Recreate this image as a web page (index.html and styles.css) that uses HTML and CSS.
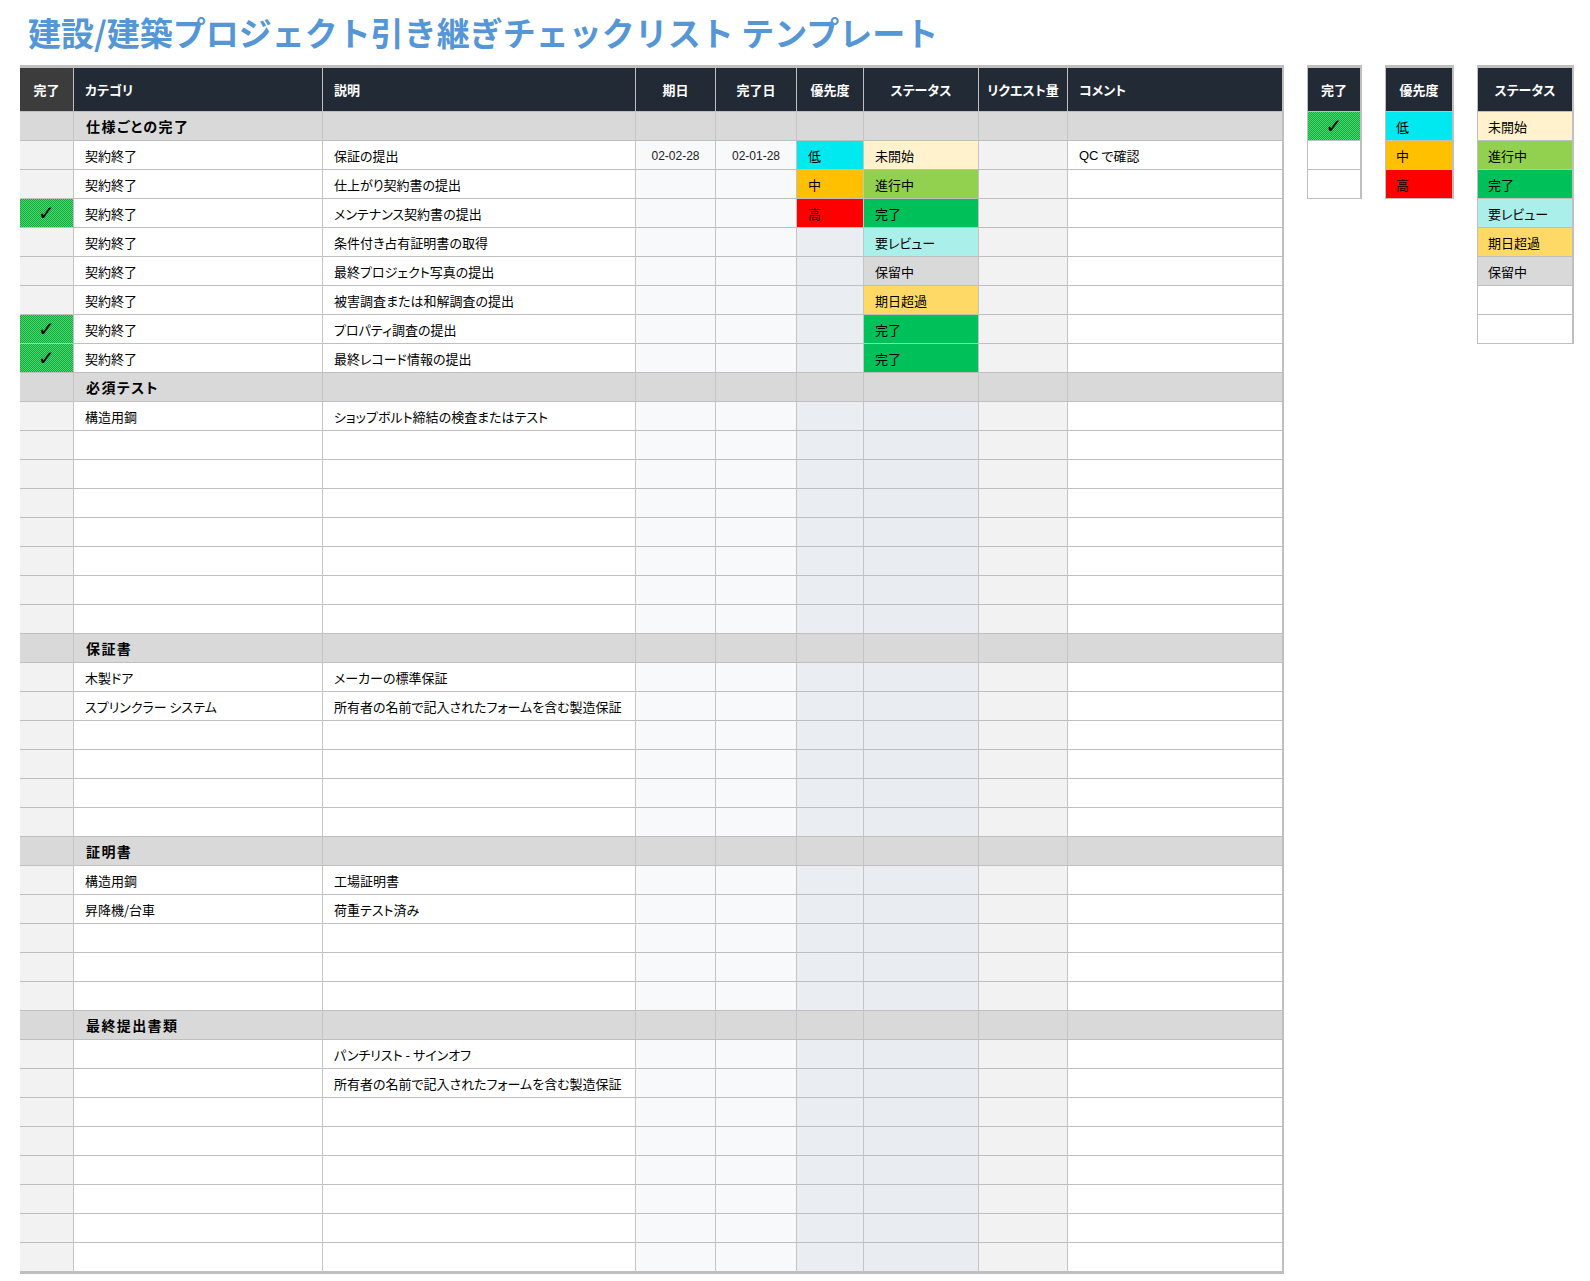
FILE: index.html
```html
<!DOCTYPE html>
<html lang="ja">
<head>
<meta charset="utf-8">
<title>建設/建築プロジェクト引き継ぎチェックリスト テンプレート</title>
<link rel="stylesheet" href="styles.css">
</head>
<body>
<h1 class="title">建設/建築プロジェクト引き継ぎチェックリスト テンプレート</h1>
<div class="layout">
  <div class="sheet">
    <div class="row head">
      <span class="c hc-done">完了</span><span class="c hl">カテゴリ</span><span class="c hl">説明</span><span class="c">期日</span><span class="c">完了日</span><span class="c">優先度</span><span class="c">ステータス</span><span class="c">リクエスト量</span><span class="c hl">コメント</span>
    </div>

    <div class="row sec"><span class="c"></span><span class="c">仕様ごとの完了</span><span class="c"></span><span class="c"></span><span class="c"></span><span class="c"></span><span class="c"></span><span class="c"></span><span class="c"></span></div>
    <div class="row"><span class="c"></span><span class="c">契約終了</span><span class="c">保証の提出</span><span class="c">02-02-28</span><span class="c">02-01-28</span><span class="c p-low">低</span><span class="c s-todo">未開始</span><span class="c"></span><span class="c"><span class="latin">QC</span>&nbsp;で確認</span></div>
    <div class="row"><span class="c"></span><span class="c">契約終了</span><span class="c">仕上がり契約書の提出</span><span class="c"></span><span class="c"></span><span class="c p-mid">中</span><span class="c s-prog">進行中</span><span class="c"></span><span class="c"></span></div>
    <div class="row"><span class="c chk">✓</span><span class="c">契約終了</span><span class="c">メンテナンス契約書の提出</span><span class="c"></span><span class="c"></span><span class="c p-high">高</span><span class="c s-done">完了</span><span class="c"></span><span class="c"></span></div>
    <div class="row"><span class="c"></span><span class="c">契約終了</span><span class="c">条件付き占有証明書の取得</span><span class="c"></span><span class="c"></span><span class="c"></span><span class="c s-review">要レビュー</span><span class="c"></span><span class="c"></span></div>
    <div class="row"><span class="c"></span><span class="c">契約終了</span><span class="c">最終プロジェクト写真の提出</span><span class="c"></span><span class="c"></span><span class="c"></span><span class="c s-hold">保留中</span><span class="c"></span><span class="c"></span></div>
    <div class="row"><span class="c"></span><span class="c">契約終了</span><span class="c">被害調査または和解調査の提出</span><span class="c"></span><span class="c"></span><span class="c"></span><span class="c s-over">期日超過</span><span class="c"></span><span class="c"></span></div>
    <div class="row"><span class="c chk">✓</span><span class="c">契約終了</span><span class="c">プロパティ調査の提出</span><span class="c"></span><span class="c"></span><span class="c"></span><span class="c s-done">完了</span><span class="c"></span><span class="c"></span></div>
    <div class="row"><span class="c chk">✓</span><span class="c">契約終了</span><span class="c">最終レコード情報の提出</span><span class="c"></span><span class="c"></span><span class="c"></span><span class="c s-done">完了</span><span class="c"></span><span class="c"></span></div>

    <div class="row sec"><span class="c"></span><span class="c">必須テスト</span><span class="c"></span><span class="c"></span><span class="c"></span><span class="c"></span><span class="c"></span><span class="c"></span><span class="c"></span></div>
    <div class="row"><span class="c"></span><span class="c">構造用鋼</span><span class="c">ショップボルト締結の検査またはテスト</span><span class="c"></span><span class="c"></span><span class="c"></span><span class="c"></span><span class="c"></span><span class="c"></span></div>
    <div class="row"><span class="c"></span><span class="c"></span><span class="c"></span><span class="c"></span><span class="c"></span><span class="c"></span><span class="c"></span><span class="c"></span><span class="c"></span></div>
    <div class="row"><span class="c"></span><span class="c"></span><span class="c"></span><span class="c"></span><span class="c"></span><span class="c"></span><span class="c"></span><span class="c"></span><span class="c"></span></div>
    <div class="row"><span class="c"></span><span class="c"></span><span class="c"></span><span class="c"></span><span class="c"></span><span class="c"></span><span class="c"></span><span class="c"></span><span class="c"></span></div>
    <div class="row"><span class="c"></span><span class="c"></span><span class="c"></span><span class="c"></span><span class="c"></span><span class="c"></span><span class="c"></span><span class="c"></span><span class="c"></span></div>
    <div class="row"><span class="c"></span><span class="c"></span><span class="c"></span><span class="c"></span><span class="c"></span><span class="c"></span><span class="c"></span><span class="c"></span><span class="c"></span></div>
    <div class="row"><span class="c"></span><span class="c"></span><span class="c"></span><span class="c"></span><span class="c"></span><span class="c"></span><span class="c"></span><span class="c"></span><span class="c"></span></div>
    <div class="row"><span class="c"></span><span class="c"></span><span class="c"></span><span class="c"></span><span class="c"></span><span class="c"></span><span class="c"></span><span class="c"></span><span class="c"></span></div>

    <div class="row sec"><span class="c"></span><span class="c">保証書</span><span class="c"></span><span class="c"></span><span class="c"></span><span class="c"></span><span class="c"></span><span class="c"></span><span class="c"></span></div>
    <div class="row"><span class="c"></span><span class="c">木製ドア</span><span class="c">メーカーの標準保証</span><span class="c"></span><span class="c"></span><span class="c"></span><span class="c"></span><span class="c"></span><span class="c"></span></div>
    <div class="row"><span class="c"></span><span class="c">スプリンクラー システム</span><span class="c">所有者の名前で記入されたフォームを含む製造保証</span><span class="c"></span><span class="c"></span><span class="c"></span><span class="c"></span><span class="c"></span><span class="c"></span></div>
    <div class="row"><span class="c"></span><span class="c"></span><span class="c"></span><span class="c"></span><span class="c"></span><span class="c"></span><span class="c"></span><span class="c"></span><span class="c"></span></div>
    <div class="row"><span class="c"></span><span class="c"></span><span class="c"></span><span class="c"></span><span class="c"></span><span class="c"></span><span class="c"></span><span class="c"></span><span class="c"></span></div>
    <div class="row"><span class="c"></span><span class="c"></span><span class="c"></span><span class="c"></span><span class="c"></span><span class="c"></span><span class="c"></span><span class="c"></span><span class="c"></span></div>
    <div class="row"><span class="c"></span><span class="c"></span><span class="c"></span><span class="c"></span><span class="c"></span><span class="c"></span><span class="c"></span><span class="c"></span><span class="c"></span></div>

    <div class="row sec"><span class="c"></span><span class="c">証明書</span><span class="c"></span><span class="c"></span><span class="c"></span><span class="c"></span><span class="c"></span><span class="c"></span><span class="c"></span></div>
    <div class="row"><span class="c"></span><span class="c">構造用鋼</span><span class="c">工場証明書</span><span class="c"></span><span class="c"></span><span class="c"></span><span class="c"></span><span class="c"></span><span class="c"></span></div>
    <div class="row"><span class="c"></span><span class="c">昇降機/台車</span><span class="c">荷重テスト済み</span><span class="c"></span><span class="c"></span><span class="c"></span><span class="c"></span><span class="c"></span><span class="c"></span></div>
    <div class="row"><span class="c"></span><span class="c"></span><span class="c"></span><span class="c"></span><span class="c"></span><span class="c"></span><span class="c"></span><span class="c"></span><span class="c"></span></div>
    <div class="row"><span class="c"></span><span class="c"></span><span class="c"></span><span class="c"></span><span class="c"></span><span class="c"></span><span class="c"></span><span class="c"></span><span class="c"></span></div>
    <div class="row"><span class="c"></span><span class="c"></span><span class="c"></span><span class="c"></span><span class="c"></span><span class="c"></span><span class="c"></span><span class="c"></span><span class="c"></span></div>

    <div class="row sec"><span class="c"></span><span class="c">最終提出書類</span><span class="c"></span><span class="c"></span><span class="c"></span><span class="c"></span><span class="c"></span><span class="c"></span><span class="c"></span></div>
    <div class="row"><span class="c"></span><span class="c"></span><span class="c">パンチリスト - サインオフ</span><span class="c"></span><span class="c"></span><span class="c"></span><span class="c"></span><span class="c"></span><span class="c"></span></div>
    <div class="row"><span class="c"></span><span class="c"></span><span class="c">所有者の名前で記入されたフォームを含む製造保証</span><span class="c"></span><span class="c"></span><span class="c"></span><span class="c"></span><span class="c"></span><span class="c"></span></div>
    <div class="row"><span class="c"></span><span class="c"></span><span class="c"></span><span class="c"></span><span class="c"></span><span class="c"></span><span class="c"></span><span class="c"></span><span class="c"></span></div>
    <div class="row"><span class="c"></span><span class="c"></span><span class="c"></span><span class="c"></span><span class="c"></span><span class="c"></span><span class="c"></span><span class="c"></span><span class="c"></span></div>
    <div class="row"><span class="c"></span><span class="c"></span><span class="c"></span><span class="c"></span><span class="c"></span><span class="c"></span><span class="c"></span><span class="c"></span><span class="c"></span></div>
    <div class="row"><span class="c"></span><span class="c"></span><span class="c"></span><span class="c"></span><span class="c"></span><span class="c"></span><span class="c"></span><span class="c"></span><span class="c"></span></div>
    <div class="row"><span class="c"></span><span class="c"></span><span class="c"></span><span class="c"></span><span class="c"></span><span class="c"></span><span class="c"></span><span class="c"></span><span class="c"></span></div>
    <div class="row"><span class="c"></span><span class="c"></span><span class="c"></span><span class="c"></span><span class="c"></span><span class="c"></span><span class="c"></span><span class="c"></span><span class="c"></span></div>
  </div>

  <div class="mini mini-done">
    <div class="mh">完了</div>
    <div class="mc chk">✓</div>
    <div class="mc"></div>
    <div class="mc"></div>
  </div>

  <div class="mini mini-pri">
    <div class="mh">優先度</div>
    <div class="mc p-low">低</div>
    <div class="mc p-mid">中</div>
    <div class="mc p-high">高</div>
  </div>

  <div class="mini mini-stat">
    <div class="mh">ステータス</div>
    <div class="mc s-todo">未開始</div>
    <div class="mc s-prog">進行中</div>
    <div class="mc s-done">完了</div>
    <div class="mc s-review">要レビュー</div>
    <div class="mc s-over">期日超過</div>
    <div class="mc s-hold">保留中</div>
    <div class="mc"></div>
    <div class="mc"></div>
  </div>
</div>
</body>
</html>
```

FILE: styles.css
```css
* { box-sizing: border-box; }

body {
  margin: 0;
  background: #ffffff;
  font-family: "Noto Sans CJK JP", "Noto Sans", "Liberation Sans", sans-serif;
  font-size: 13px;
  color: #000000;
  font-feature-settings: "palt";
}

.title {
  margin: 0;
  height: 65px;
  padding: 10px 0 0 28px;
  font-size: 33px;
  line-height: 44px;
  font-weight: 700;
  color: #5596d6;
  white-space: nowrap;
  font-feature-settings: normal;
}

.layout {
  display: flex;
  align-items: flex-start;
  gap: 23px;
  margin-left: 20px;
}

.sheet {
  width: 1264px;
  border-top: 3px solid #bfbfbf;
  border-right: 2px solid #bfbfbf;
  border-bottom: 2px solid #bfbfbf;
}

.row {
  display: grid;
  grid-template-columns: 54px 249px 313px 80px 81px 67px 115px 89px 214px;
  height: 29px;
}

.c {
  display: flex;
  align-items: center;
  padding: 0 11px;
  border-right: 1px solid #c4c4c4;
  border-bottom: 1px solid #bfbfbf;
  white-space: nowrap;
  overflow: hidden;
}
.c:last-child { border-right: none; }

.latin { font-family: "Liberation Sans", Arial, sans-serif; }

/* column backgrounds for data rows */
.row > .c:nth-child(1) { background: #f2f2f2; justify-content: center; padding: 0; }
.row > .c:nth-child(2),
.row > .c:nth-child(3) { background: #ffffff; }
.row > .c:nth-child(4),
.row > .c:nth-child(5) {
  background: #f8f9fb;
  justify-content: center;
  color: #222222;
  font-size: 12px;
  padding-top: 1px;
  font-family: "Liberation Sans", Arial, sans-serif;
}
.row > .c:nth-child(6) { background: #eaedf1; }
.row > .c:nth-child(7) { background: #e9ecf0; }
.row > .c:nth-child(8) { background: #f2f2f2; }
.row > .c:nth-child(9) { background: #ffffff; }

/* header */
.row.head { height: 44px; }
.row.head > .c {
  background: #222a36;
  color: #ffffff;
  font-weight: 700;
  font-size: 13px;
  justify-content: center;
  padding: 0 4px;
  border-right-color: #bfbfbf;
  font-family: "Noto Sans CJK JP", sans-serif;
}
.row.head > .c.hl { justify-content: flex-start; padding-left: 11px; }
.row.head > .c.hc-done { background: #3c3c3c; }

/* section rows */
.row.sec > .c { background: #d9d9d9; }
.row.sec > .c:nth-child(2) { font-weight: 700; font-size: 14px; letter-spacing: 1.4px; padding-left: 12px; }

/* check cell */
.row > .c.chk,
.mc.chk {
  background: repeating-conic-gradient(#00b050 0 25%, #5bd35b 0 50%) 0 0 / 2px 2px;
  color: #000000;
  font-size: 20px;
  font-weight: 700;
  font-family: "DejaVu Sans", sans-serif;
  justify-content: center;
  padding: 0;
}

/* priority */
.row > .c.p-low, .mc.p-low { background: #00e9f0; }
.row > .c.p-mid, .mc.p-mid { background: #ffc000; }
.row > .c.p-high, .mc.p-high { background: #ff0000; }

/* status */
.row > .c.s-todo, .mc.s-todo { background: #fff2cc; }
.row > .c.s-prog, .mc.s-prog { background: #92d050; }
.row > .c.s-done, .mc.s-done { background: #00c05a; }
.row > .c.s-review, .mc.s-review { background: #abefea; }
.row > .c.s-over, .mc.s-over { background: #ffd966; }
.row > .c.s-hold, .mc.s-hold { background: #d9d9d9; }

/* legend mini tables */
.mini {
  border-top: 3px solid #bfbfbf;
  border-left: 1px solid #bfbfbf;
  border-right: 2px solid #bfbfbf;
  border-bottom: 1px solid #bfbfbf;
}
.mini-done { width: 55px; }
.mini-pri { width: 69px; }
.mini-stat { width: 97px; }

.mh {
  height: 44px;
  display: flex;
  align-items: center;
  justify-content: center;
  background: #222a36;
  color: #ffffff;
  font-weight: 700;
  border-bottom: 1px solid #bfbfbf;
}

.mc {
  height: 29px;
  display: flex;
  align-items: center;
  padding: 0 10px;
  border-bottom: 1px solid #bfbfbf;
  background: #ffffff;
}
.mc:last-child { border-bottom: none; height: 28px; }
```
